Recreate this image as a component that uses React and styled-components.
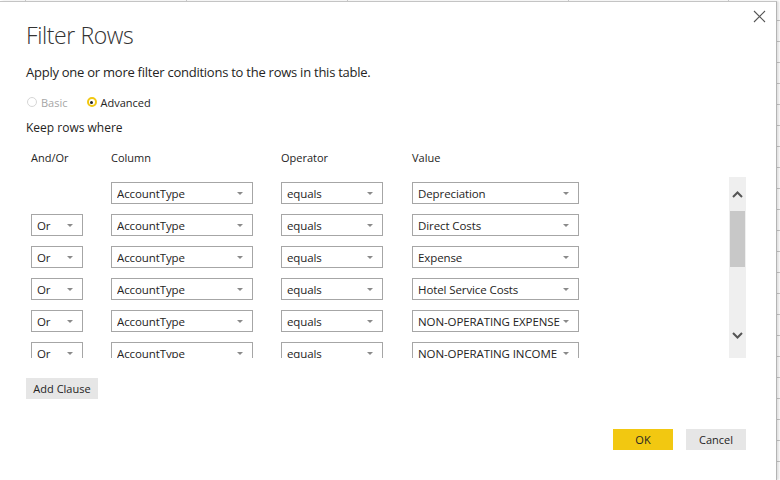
import React from 'react';
import styled, { createGlobalStyle } from 'styled-components';

const GlobalStyle = createGlobalStyle`
  html, body {
    margin: 0;
    padding: 0;
  }
  body {
    font-family: "Open Sans", "Noto Sans", sans-serif;
    color: #252423;
    background: #fff;
  }
`;

// spreadsheet grid peeking out behind the dialog
const Backdrop = styled.div`
  width: 780px;
  height: 480px;
  box-sizing: border-box;
  padding: 1px 3px 0 0;
  overflow: hidden;
  display: flex;
  background:
    linear-gradient(#d0d0d0, #d0d0d0) 25px 0 / 1px 100% no-repeat,
    linear-gradient(#d0d0d0, #d0d0d0) 186px 0 / 1px 100% no-repeat,
    linear-gradient(#d0d0d0, #d0d0d0) 347px 0 / 1px 100% no-repeat,
    linear-gradient(#d0d0d0, #d0d0d0) 568px 0 / 1px 100% no-repeat,
    linear-gradient(#d0d0d0, #d0d0d0) 728px 0 / 1px 100% no-repeat,
    repeating-linear-gradient(to bottom, #fff 0 20px, #c8c8c8 20px 21px);
`;

const Dialog = styled.div`
  position: relative;
  flex: 1;
  box-sizing: border-box;
  background: #fff;
  border-top: 1px solid #c4c4c4;
  border-right: 1px solid #b4b4b4;
  box-shadow: 2px 0 2px rgba(0, 0, 0, 0.12);
  padding: 17px 30px 0 26px;
  display: flex;
  flex-direction: column;
`;

const CloseButton = styled.button`
  position: absolute;
  top: 7px;
  right: 9px;
  width: 15px;
  height: 15px;
  padding: 0;
  border: none;
  background: none;
  display: flex;
  align-items: center;
  justify-content: center;
`;

const Title = styled.h1`
  margin: 0;
  font-size: 23px;
  font-weight: 300;
  letter-spacing: -0.4px;
  line-height: 32px;
  color: #333;
`;

const Subtitle = styled.p`
  margin: 11px 0 0;
  font-size: 13px;
  letter-spacing: -0.25px;
  line-height: 20px;
  color: #252423;
`;

const RadioRow = styled.div`
  margin-top: 11px;
  display: flex;
  align-items: center;
  gap: 19px;
  height: 18px;
  padding-left: 1px;
`;

const RadioOption = styled.label`
  display: flex;
  align-items: center;
  gap: 4px;
  font-size: 11px;
  color: ${p => (p.disabled ? '#a6a6a6' : '#252423')};
`;

const RadioDot = styled.span`
  box-sizing: border-box;
  width: 10px;
  height: 10px;
  border-radius: 50%;
  border: ${p => (p.checked ? '2px solid #f2c811' : '1px solid #d6d6d6')};
  display: flex;
  align-items: center;
  justify-content: center;
  &::after {
    content: '';
    display: ${p => (p.checked ? 'block' : 'none')};
    width: 3px;
    height: 3px;
    border-radius: 50%;
    background: #252423;
  }
`;

const Label = styled.div`
  margin-top: 8px;
  font-size: 12px;
  line-height: 18px;
  color: #252423;
`;

const GRID = '80px 170px 131px 167px';

const HeaderRow = styled.div`
  margin-top: 12px;
  padding-left: 5px;
  display: grid;
  grid-template-columns: ${GRID};
  font-size: 11px;
  line-height: 18px;
  color: #252423;
`;

const ClauseArea = styled.div`
  margin-top: 10px;
  display: flex;
  padding-left: 5px;
`;

const Viewport = styled.div`
  flex: 1;
  height: 181px;
  overflow: hidden;
  padding-top: 5px;
  box-sizing: border-box;
`;

const ClauseRow = styled.div`
  display: grid;
  grid-template-columns: ${GRID};
  height: 22px;
  margin-bottom: 10px;
`;

const Select = styled.div`
  box-sizing: border-box;
  width: ${p => p.w}px;
  height: 22px;
  border: 1px solid #a6a6a6;
  padding: 0 9px 0 5px;
  display: flex;
  align-items: center;
  font-size: 11.5px;
  letter-spacing: -0.1px;
  color: #252423;
  background: #fff;
`;

const SelectText = styled.span`
  flex: 1;
  white-space: nowrap;
  overflow: hidden;
`;

const Caret = styled.span`
  flex: none;
  width: 0;
  height: 0;
  border-left: 3px solid transparent;
  border-right: 3px solid transparent;
  border-top: 3px solid #8a8a8a;
  margin-left: 1px;
`;

const Scrollbar = styled.div`
  width: 17px;
  height: 181px;
  background: #efefef;
  display: flex;
  flex-direction: column;
  align-items: center;
`;

const ScrollArrow = styled.div`
  height: ${p => p.h}px;
  display: flex;
  align-items: center;
  justify-content: center;
`;

const Thumb = styled.div`
  width: 15px;
  height: 56px;
  background: #c8c8c8;
`;

const ScrollTrack = styled.div`
  flex: 1;
`;

const Button = styled.button`
  box-sizing: border-box;
  width: ${p => p.w}px;
  height: 21px;
  border: none;
  padding: 0;
  font-family: inherit;
  font-size: 11px;
  color: #252423;
  background: ${p => (p.primary ? '#f2c811' : '#e6e6e6')};
`;

const AddRow = styled.div`
  margin-top: 18px;
`;

const Footer = styled.div`
  margin-top: 30px;
  display: flex;
  justify-content: flex-end;
  gap: 13px;
`;

const Chevron = ({ up }) => (
  <svg width="11" height="7" viewBox="0 0 11 7">
    <polyline
      points={up ? '1,6 5.5,1.5 10,6' : '1,1 5.5,5.5 10,1'}
      fill="none"
      stroke="#555"
      strokeWidth="2"
    />
  </svg>
);

const clauses = [
  { op: null, value: 'Depreciation' },
  { op: 'Or', value: 'Direct Costs' },
  { op: 'Or', value: 'Expense' },
  { op: 'Or', value: 'Hotel Service Costs' },
  { op: 'Or', value: 'NON-OPERATING EXPENSE' },
  { op: 'Or', value: 'NON-OPERATING INCOME' },
];

const Dropdown = ({ w, children }) => (
  <Select w={w}>
    <SelectText>{children}</SelectText>
    <Caret />
  </Select>
);

export default function App() {
  return (
    <>
      <GlobalStyle />
      <Backdrop>
        <Dialog>
          <CloseButton aria-label="Close">
            <svg width="13" height="13" viewBox="0 0 13 13">
              <path d="M1 1 L12 12 M12 1 L1 12" stroke="#555" strokeWidth="1.1" />
            </svg>
          </CloseButton>
          <Title>Filter Rows</Title>
          <Subtitle>Apply one or more filter conditions to the rows in this table.</Subtitle>
          <RadioRow>
            <RadioOption disabled>
              <RadioDot />
              Basic
            </RadioOption>
            <RadioOption>
              <RadioDot checked />
              Advanced
            </RadioOption>
          </RadioRow>
          <Label>Keep rows where</Label>
          <HeaderRow>
            <span>And/Or</span>
            <span>Column</span>
            <span>Operator</span>
            <span>Value</span>
          </HeaderRow>
          <ClauseArea>
            <Viewport>
              {clauses.map((c, i) => (
                <ClauseRow key={i}>
                  {c.op ? <Dropdown w={52}>{c.op}</Dropdown> : <span />}
                  <Dropdown w={142}>AccountType</Dropdown>
                  <Dropdown w={102}>equals</Dropdown>
                  <Dropdown w={167}>{c.value}</Dropdown>
                </ClauseRow>
              ))}
            </Viewport>
            <Scrollbar>
              <ScrollArrow h={34}>
                <Chevron up />
              </ScrollArrow>
              <Thumb />
              <ScrollTrack />
              <ScrollArrow h={45}>
                <Chevron />
              </ScrollArrow>
            </Scrollbar>
          </ClauseArea>
          <AddRow>
            <Button w={72}>Add Clause</Button>
          </AddRow>
          <Footer>
            <Button primary w={60}>OK</Button>
            <Button w={60}>Cancel</Button>
          </Footer>
        </Dialog>
      </Backdrop>
    </>
  );
}
